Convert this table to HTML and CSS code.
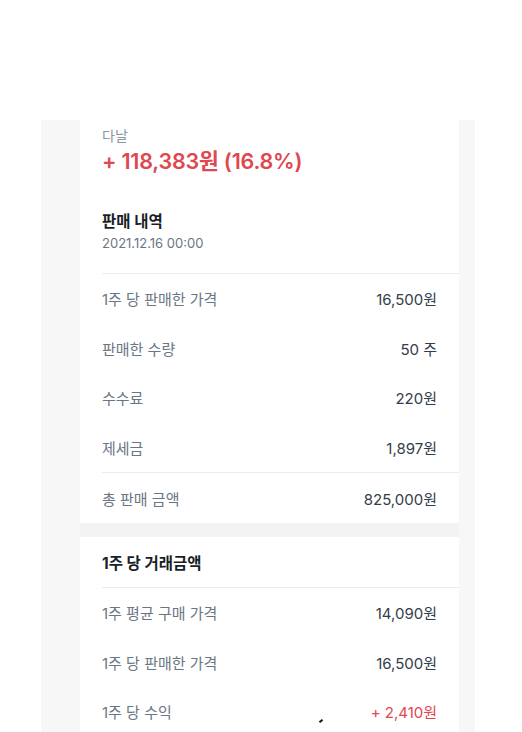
FILE: index.html
```html
<!DOCTYPE html>
<html lang="ko">
<head>
<meta charset="utf-8">
<link rel="stylesheet" href="styles.css">
</head>
<body>
<div class="page">
  <div class="panel">
    <div class="card">
      <section class="summary">
        <div class="stock">다날</div>
        <div class="profit">+ 118,383원 (16.8%)</div>
        <div class="sale-title">판매 내역</div>
        <div class="sale-date">2021.12.16 00:00</div>
      </section>
      <div class="rows">
        <div class="row"><span class="label">1주 당 판매한 가격</span><span class="value">16,500원</span></div>
        <div class="row"><span class="label">판매한 수량</span><span class="value">50 주</span></div>
        <div class="row"><span class="label">수수료</span><span class="value">220원</span></div>
        <div class="row"><span class="label">제세금</span><span class="value">1,897원</span></div>
      </div>
      <div class="rows total">
        <div class="row"><span class="label">총 판매 금액</span><span class="value">825,000원</span></div>
      </div>
      <div class="sep"></div>
      <div class="sec-head">1주 당 거래금액</div>
      <div class="rows">
        <div class="row"><span class="label">1주 평균 구매 가격</span><span class="value">14,090원</span></div>
        <div class="row"><span class="label">1주 당 판매한 가격</span><span class="value">16,500원</span></div>
        <div class="row"><span class="label">1주 당 수익</span><span class="value red">+ 2,410원</span></div>
      </div>
    </div>
  </div>
  <span class="mark"></span>
</div>
</body>
</html>
```
FILE: styles.css
```css
html, body {
  margin: 0;
  padding: 0;
  background: #ffffff;
  height: 100%;
  overflow: hidden;
}
body {
  font-family: Inter, "Noto Sans CJK KR", sans-serif;
  color: #333d4b;
}
.page {
  position: relative;
  padding-top: 120px;
  height: 612px;
}
.panel {
  margin-left: 41px;
  width: 434px;
  height: 100%;
  background: #f7f7f7;
  padding-left: 39px;
  box-sizing: border-box;
}
.card {
  width: 379px;
  height: 100%;
  background: #ffffff;
}
.summary {
  padding: 6px 0 21px 22px;
}
.stock {
  font-size: 14px;
  line-height: 20px;
  color: #8b95a1;
}
.profit {
  font-size: 21.5px;
  line-height: 30px;
  font-weight: 600;
  color: #e0474f;
  letter-spacing: -0.2px;
}
.sale-title {
  margin-top: 34px;
  font-size: 15.5px;
  line-height: 24px;
  font-weight: 700;
  color: #191f28;
}
.sale-date {
  font-size: 13px;
  line-height: 18px;
  color: #6b7684;
}
.rows {
  margin-left: 22px;
  border-top: 1px solid #e9ebee;
}
.row {
  height: 49.5px;
  display: flex;
  align-items: center;
  justify-content: space-between;
  padding-right: 22px;
  font-size: 15px;
}
.total .row {
  height: 50px;
}
.label {
  color: #6b7684;
}
.value {
  color: #333d4b;
}
.value.red {
  color: #e0474f;
}
.sep {
  height: 14px;
  background: #f2f3f5;
}
.sec-head {
  height: 50px;
  padding-left: 22px;
  display: flex;
  align-items: center;
  font-size: 15.5px;
  font-weight: 700;
  color: #191f28;
}
.mark {
  position: absolute;
  left: 319px;
  top: 720px;
  width: 4px;
  height: 2px;
  background: #111;
  transform: rotate(-40deg);
}
```
